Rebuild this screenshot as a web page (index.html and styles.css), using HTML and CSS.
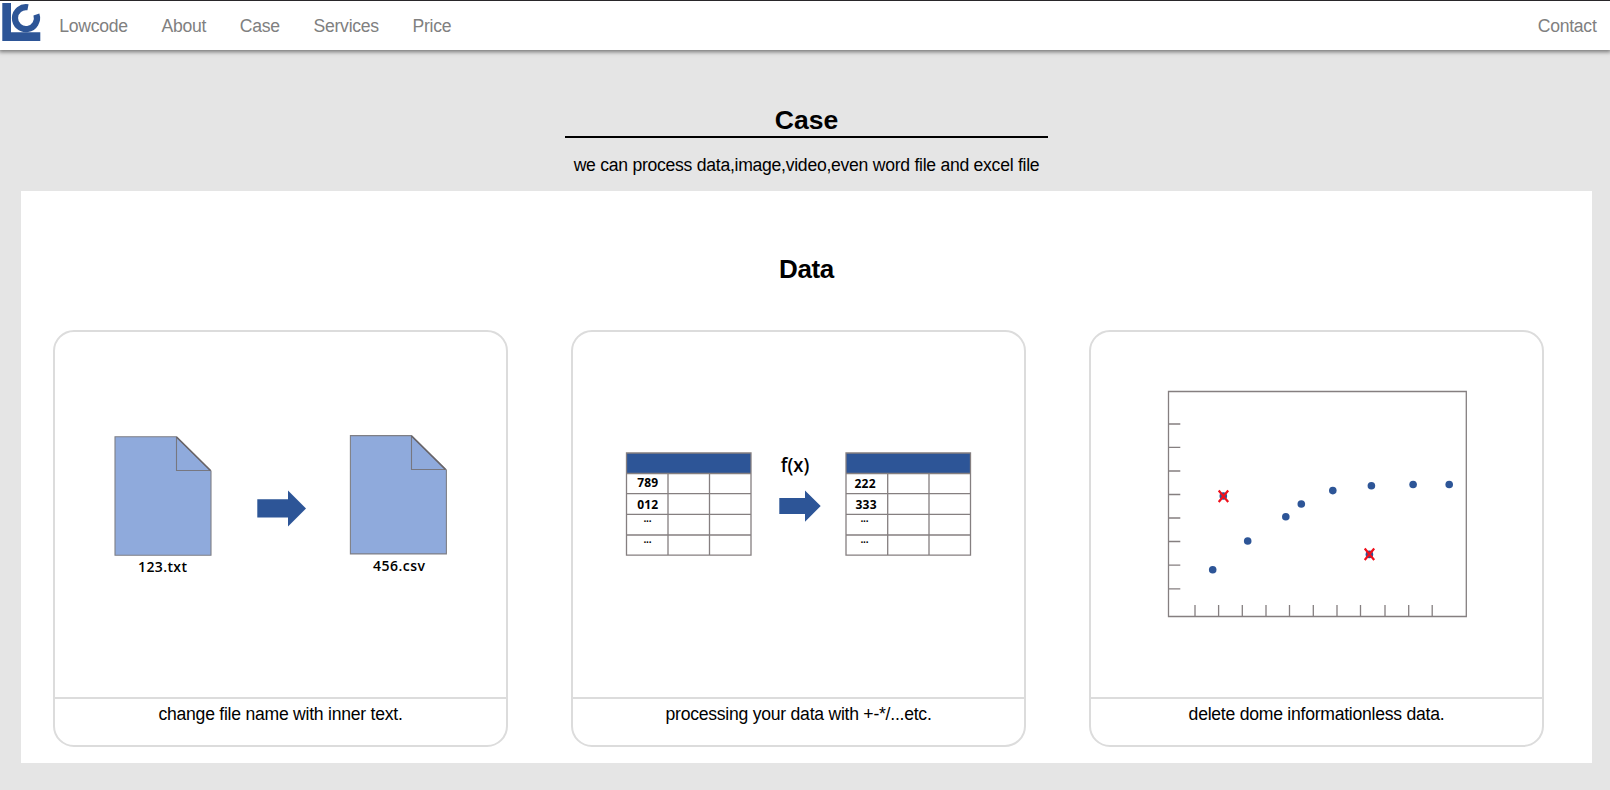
FILE: index.html
```html
<!DOCTYPE html>
<html lang="en">
<head>
<meta charset="utf-8">
<title>Lowcode</title>
<link rel="stylesheet" href="styles.css">
</head>
<body>
<header class="navbar">
  <svg class="logo" width="42" height="44" viewBox="0 0 42 44">
    <path class="logo-base" d="M2.3 2H11V31.3H40.3V40H2.3Z"/>
    <path class="logo-ring" d="M28 6.3A11 11 0 1 0 36.4 13.6"/>
  </svg>
  <nav class="links">
    <a class="link">Lowcode</a>
    <a class="link">About</a>
    <a class="link">Case</a>
    <a class="link">Services</a>
    <a class="link">Price</a>
  </nav>
  <a class="link contact">Contact</a>
</header>
<main class="main">
  <h2 class="title">Case</h2>
  <p class="subtitle">we can process data,image,video,even word file and excel file</p>
  <section class="panel">
    <h2 class="panel-title">Data</h2>
    <div class="cards">
      <article class="card">
        <svg class="figure" viewBox="55 332 451 365">
          <path class="sheet" d="M115 436.8H176.5L211 471V555.2H115Z"/>
          <path class="fold" d="M176.5 437V470.5H210.5"/>
          <path class="fold edge" d="M176.5 437L210.5 470.5"/>
          <path class="sheet" d="M350.4 435.6H411.5L446.4 470V553.9H350.4Z"/>
          <path class="fold" d="M411.5 436V469.5H445.5"/>
          <path class="fold edge" d="M411.5 436L445.5 469.5"/>
          <path class="arrow" d="M257.3 499.3H288V490.5L306 508.5L288 526.5V517.5H257.3Z"/>
          <text class="label" x="138" y="571.5" textLength="49">123.txt</text>
          <text class="label" x="373" y="570.5" textLength="52">456.csv</text>
        </svg>
        <p class="caption">change file name with inner text.</p>
      </article>
      <article class="card">
        <svg class="figure" viewBox="573 332 451 365">
          <path class="arrow" d="M626.5 453H751V473.5H626.5ZM846 453H970.5V473.5H846Z"/>
          <path class="grid" d="M626.5 453H751V555.2H626.5ZM626.5 473.5H751M626.5 493.7H751M626.5 514.3H751M626.5 535H751M668 473.5V555M709.5 473.5V555"/>
          <path class="grid" d="M846 453H970.5V555.2H846ZM846 473.5H970.5M846 493.7H970.5M846 514.3H970.5M846 535H970.5M887.7 473.5V555M929 473.5V555"/>
          <text class="cell" x="637.2" y="486.7" textLength="21">789</text>
          <text class="cell" x="637.2" y="509" textLength="21">012</text>
          <text class="cell" x="854.5" y="487.7" textLength="21">222</text>
          <text class="cell" x="855.5" y="509.2" textLength="21">333</text>
          <text class="cell dots" x="643.5" y="521.5" textLength="8">...</text>
          <text class="cell dots" x="643.5" y="542.5" textLength="8">...</text>
          <text class="cell dots" x="860.5" y="521.5" textLength="8">...</text>
          <text class="cell dots" x="860.5" y="542.5" textLength="8">...</text>
          <text class="formula" x="780.8" y="472" textLength="28.5" lengthAdjust="spacingAndGlyphs">f(x)</text>
          <path class="arrow" d="M779.3 498H805V490.5L820.7 506L805 521.7V514H779.3Z"/>
        </svg>
        <p class="caption">processing your data with +-*/...etc.</p>
      </article>
      <article class="card">
        <svg class="figure" viewBox="1091 332 451 365">
          <path class="axis" d="M1168.5 391.5H1466.3V616.5H1168.5ZM1168.5 424H1180.3M1168.5 447.3H1180.3M1168.5 471H1180.3M1168.5 494.5H1180.3M1168.5 518H1180.3M1168.5 541.5H1180.3M1168.5 565.2H1180.3M1168.5 588.8H1180.3M1195 605V616.5M1218.6 605V616.5M1242.3 605V616.5M1266 605V616.5M1289.5 605V616.5M1313.3 605V616.5M1337 605V616.5M1360.5 605V616.5M1385 605V616.5M1408.7 605V616.5M1432.2 605V616.5"/>
          <g class="points">
            <circle cx="1212.7" cy="569.7" r="3.8"/>
            <circle cx="1223.3" cy="496" r="3.8"/>
            <circle cx="1247.7" cy="541" r="3.8"/>
            <circle cx="1285.8" cy="516.7" r="3.8"/>
            <circle cx="1301.3" cy="504" r="3.8"/>
            <circle cx="1332.8" cy="490.6" r="3.8"/>
            <circle cx="1371.4" cy="485.8" r="3.8"/>
            <circle cx="1413.1" cy="484.5" r="3.8"/>
            <circle cx="1449.2" cy="484.5" r="3.8"/>
            <circle cx="1369.4" cy="554.4" r="3.8"/>
          </g>
          <path class="cross" d="M1218.7 490.5L1228.2 502M1228.2 490.5L1218.7 502M1364.7 548.5L1374.2 560M1374.2 548.5L1364.7 560"/>
        </svg>
        <p class="caption">delete dome informationless data.</p>
      </article>
    </div>
  </section>
</main>
</body>
</html>
```
FILE: styles.css
```css
* { box-sizing: border-box; }
body {
  margin: 0;
  height: 790px;
  overflow: hidden;
  background: #e5e5e5;
  color: #000;
  font: 17.6px/20px "Liberation Sans", Arial, sans-serif;
  letter-spacing: -0.27px;
}
.navbar {
  position: relative;
  display: flex;
  align-items: flex-start;
  height: 50px;
  padding-right: 13.5px;
  background: #fff;
  border-top: 1px solid #29272a;
  box-shadow: 0 1px 4px 1px #777;
}
.logo { flex: none; }
.logo-base { fill: #2d5597; }
.logo-ring { fill: none; stroke: #2d5597; stroke-width: 6.2; }
.links { display: flex; gap: 33.7px; padding-left: 17.3px; }
.link { padding-top: 15px; color: #808080; }
.contact { margin-left: auto; }
.main { padding: 55px 18px 0 21px; }
.title {
  width: 483px;
  height: 33px;
  margin: 0 auto;
  border-bottom: 2px solid #000;
  font-size: 26.5px;
  line-height: 30px;
  letter-spacing: 0;
  text-align: center;
}
.subtitle { margin: 17px 0 0; height: 36px; text-align: center; }
.panel { height: 572px; padding: 63px 47px 0 32px; background: #fff; }
.panel-title { margin: 0; padding-left: 15px; font-size: 26px; line-height: 30px; letter-spacing: -0.4px; text-align: center; }
.cards { display: flex; gap: 63px; margin-top: 46px; letter-spacing: -0.25px; }
.card { width: 455px; height: 417px; border: 2px solid #dcdcdc; border-radius: 21px; }
.figure { display: block; width: 451px; height: 365px; letter-spacing: 0; }
.caption { margin: 0; padding-top: 5px; border-top: 2px solid #dcdcdc; text-align: center; }
.sheet { fill: #8faadc; stroke: #7f7f85; stroke-width: 1.1; }
.fold { fill: none; stroke: #777780; stroke-width: 1.1; }
.edge { stroke: #686468; stroke-width: 1.5; }
.arrow { fill: #2d5597; }
.grid, .axis { fill: none; stroke: #857f80; stroke-width: 1.3; }
.label { font: 600 14px "Open Sans", sans-serif; }
.cell { font: 700 12px "Open Sans", sans-serif; }
.dots { font-size: 10px; }
.formula { font: 600 19px "Open Sans", sans-serif; }
.points { fill: #2d5597; }
.cross { fill: none; stroke: #f0101c; stroke-width: 2.2; }
```
